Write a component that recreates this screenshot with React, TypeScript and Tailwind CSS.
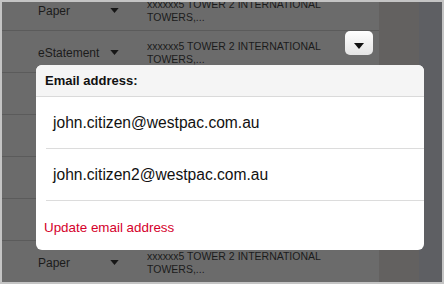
import React from 'react';

// rows under the popover are hidden, so only the visible ones carry content
const rows = [
  { type: 'Paper', show: true },
  { type: 'eStatement', show: true, button: true },
  { type: '', show: false },
  { type: '', show: false },
  { type: '', show: false },
  { type: '', show: false },
  { type: 'Paper', show: true },
];

function Caret({ className = '' }: { className?: string }) {
  return (
    <svg width="10" height="6" viewBox="0 0 10 6" className={className}>
      <path d="M0 0 L10 0 L5 6 Z" fill="currentColor" />
    </svg>
  );
}

export default function App() {
  return (
    <div
      className="w-[444px] h-[284px] border-2 border-[#c4c4c4] bg-[#6b6b6b] overflow-hidden relative"
      style={{ fontFamily: '"Liberation Sans", Arial, sans-serif' }}
    >
      <div className="flex h-full">
        {/* dimmed statements table */}
        <div className="w-[377px] -mt-[13px]">
          {rows.map((r, i) => (
            <div key={i} className="h-[42px] flex items-center border-b border-[#5b5b5b] relative pt-[2px]">
              {r.show && (
                <>
                  <div className="pl-[36px] w-[108px] text-[12px] text-[#1b1b1b]">{r.type}</div>
                  <Caret className="text-[#161616] w-[9px] h-[5px]" />
                  <div className="ml-[28px] text-[10.5px] leading-[13px] text-[#1b1b1b]">
                    <div>xxxxxx5 TOWER 2 INTERNATIONAL</div>
                    <div>TOWERS,...</div>
                  </div>
                </>
              )}
              {r.button && (
                <div className="absolute left-[343px] top-0 w-[28px] h-[24px] rounded-[5px] bg-gradient-to-b from-white to-[#e4e4e4] flex items-end justify-center pb-[6px]">
                  <Caret className="text-[#111]" />
                </div>
              )}
            </div>
          ))}
        </div>
        <div className="w-[40px] bg-[#636160]" />
        <div className="flex-1 bg-[#5e5f63]" />
      </div>

      {/* email picker popover */}
      <div className="absolute left-[34px] top-[63px] w-[388px] h-[185px] bg-white rounded-[6px] overflow-hidden flex flex-col">
        <div className="h-[32px] bg-[#f5f5f5] border-b border-[#dadada] flex items-center pl-[9px] text-[13px] font-bold text-[#111]">
          Email address:
        </div>
        <div className="ml-[10px] h-[52px] border-b border-[#dcdcdc] flex items-center pl-[7px] text-[15.6px] text-[#111]">
          john.citizen@westpac.com.au
        </div>
        <div className="ml-[10px] h-[52px] border-b border-[#dcdcdc] flex items-center pl-[7px] text-[15.6px] text-[#111]">
          john.citizen2@westpac.com.au
        </div>
        <div className="flex-1 flex items-center pl-[8px] pt-[5px] text-[13.4px] text-[#d5002b]">
          Update email address
        </div>
      </div>
    </div>
  );
}
